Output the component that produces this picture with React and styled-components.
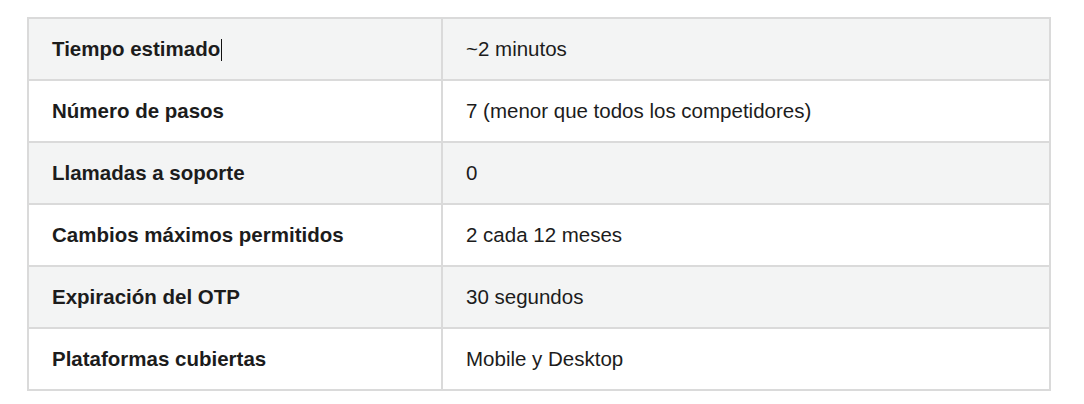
import React from "react";
import styled, { createGlobalStyle } from "styled-components";

const Global = createGlobalStyle`
  html, body { margin: 0; padding: 0; background: #ffffff; }
  body { font-family: "Liberation Sans", Arial, sans-serif; }
`;

const Page = styled.div`
  padding: 17px 0 0 27px;
`;

const Table = styled.table`
  width: 1024px;
  border-collapse: collapse;
  table-layout: fixed;
  border: 2px solid #dadada;
`;

const Row = styled.tr`
  height: 62px;
  background: ${(p) => (p.$shaded ? "#f3f4f4" : "#ffffff")};
`;

const Cell = styled.td`
  border: 2px solid #dadada;
  padding: 0 0 0 23px;
  font-size: 20.5px;
  line-height: 24px;
  color: #1c1c1c;
  font-weight: ${(p) => (p.$head ? 700 : 400)};
  vertical-align: middle;
  width: ${(p) => (p.$head ? "389px" : "auto")};
`;

const Caret = styled.span`
  display: inline-block;
  width: 1px;
  height: 22px;
  background: #111;
  vertical-align: -5px;
  margin-left: 1px;
`;

const rows = [
  ["Tiempo estimado", "~2 minutos", true],
  ["Número de pasos", "7 (menor que todos los competidores)"],
  ["Llamadas a soporte", "0"],
  ["Cambios máximos permitidos", "2 cada 12 meses"],
  ["Expiración del OTP", "30 segundos"],
  ["Plataformas cubiertas", "Mobile y Desktop"],
];

export default function App() {
  return (
    <>
      <Global />
      <Page>
        <Table>
          <tbody>
            {rows.map(([k, v, caret], i) => (
              <Row key={k} $shaded={i % 2 === 0}>
                <Cell $head>
                  {k}
                  {caret && <Caret />}
                </Cell>
                <Cell>{v}</Cell>
              </Row>
            ))}
          </tbody>
        </Table>
      </Page>
    </>
  );
}
